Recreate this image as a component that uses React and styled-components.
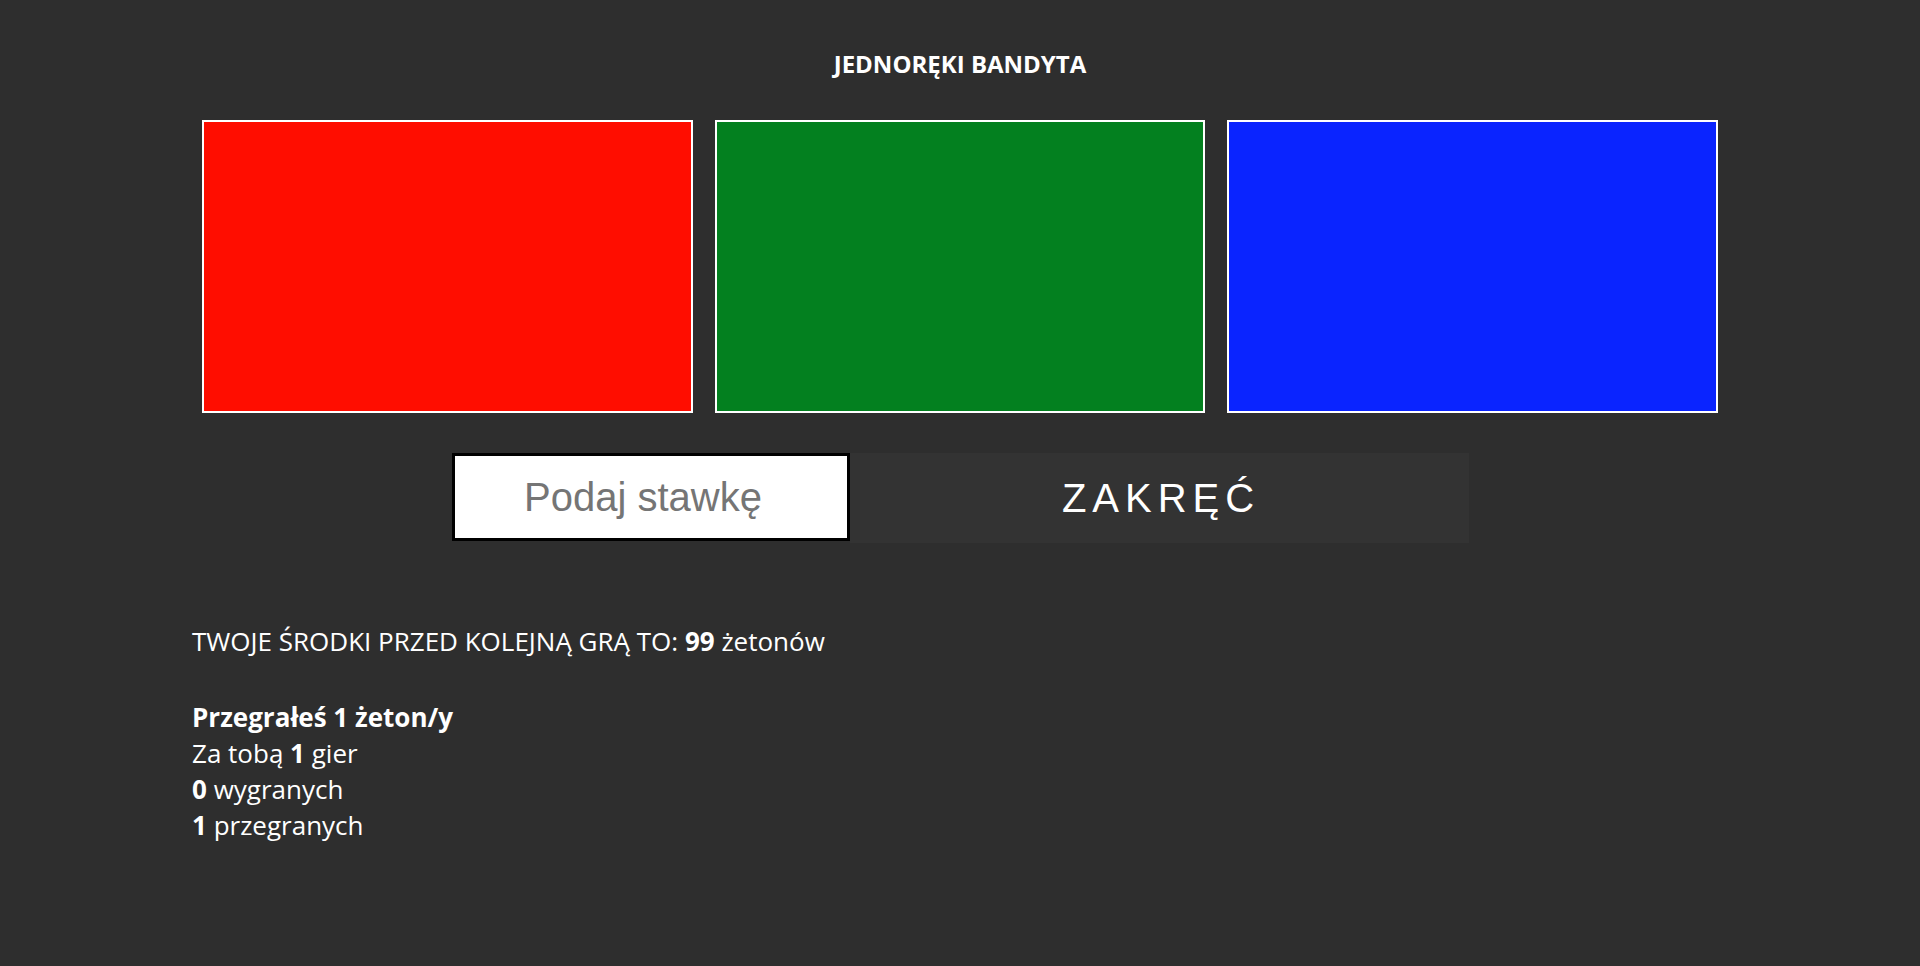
import React from 'react';
import styled, { createGlobalStyle } from 'styled-components';

const GlobalStyle = createGlobalStyle`
body {
  margin: 0;
  background: #2e2e2e;
  color: #ffffff;
  font-family: "Open Sans", "Noto Sans", sans-serif;
}
`

const Page = styled.div`
width: 80%;
margin: 0 auto;
padding-bottom: 60px;
`
const Title = styled.h1`
font-size: 24px;
font-weight: 700;
line-height: 33px;
text-align: center;
margin: 47px 0 40px;
`
const Reels = styled.div`
display: flex;
gap: 22px;
padding: 0 10px;
`
const Reel = styled.div`
flex: 1;
height: 289px;
border: 2px solid #ffffff;
background: ${props => props.color};
`
const Controls = styled.div`
display: flex;
justify-content: center;
align-items: flex-start;
margin-top: 40px;
`
const BetInput = styled.input`
box-sizing: border-box;
width: 398px;
height: 88px;
border: 3px solid #000000;
background: #ffffff;
font-family: "Liberation Sans", Arial, sans-serif;
font-size: 40px;
text-align: center;
color: #333;
padding: 0 15px 0 0;
outline: none;
&::placeholder {
  color: #757575;
}
`
const SpinButton = styled.button`
width: 619px;
height: 90px;
border: none;
background: #333333;
color: #ffffff;
font-family: "Liberation Sans", Arial, sans-serif;
font-size: 40px;
letter-spacing: 6px;
padding: 0 0 0 4px;
cursor: pointer;
`
const Stats = styled.div`
margin-top: 80px;
font-size: 26px;
line-height: 36px;
`
const Line = styled.div`
min-height: ${props => props.blank ? '40px' : '36px'};
`

export default function App() {
  return (
    <>
      <GlobalStyle />
      <Page>
        <Title>JEDNORĘKI BANDYTA</Title>
        <Reels>
          <Reel color="#ff0d00" />
          <Reel color="#03801f" />
          <Reel color="#0a24ff" />
        </Reels>
        <Controls>
          <BetInput type="text" placeholder="Podaj stawkę" />
          <SpinButton>ZAKRĘĆ</SpinButton>
        </Controls>
        <Stats>
          <Line>TWOJE ŚRODKI PRZED KOLEJNĄ GRĄ TO: <b>99</b> żetonów</Line>
          <Line blank />
          <Line><b>Przegrałeś 1 żeton/y</b></Line>
          <Line>Za tobą <b>1</b> gier</Line>
          <Line><b>0</b> wygranych</Line>
          <Line><b>1</b> przegranych</Line>
        </Stats>
      </Page>
    </>
  )
}
